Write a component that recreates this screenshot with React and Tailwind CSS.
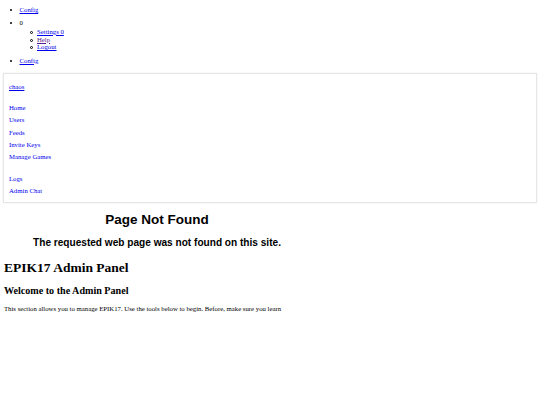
function Dot() {
  return <span className="mr-[8px] mt-[1px] h-[2px] w-[2px] shrink-0 rounded-full bg-black" />;
}

function Ring() {
  return <span className="mr-[4px] mt-[1px] h-[3px] w-[3px] shrink-0 rounded-full border-[0.75px] border-black" />;
}

export default function App() {
  const serif = { fontFamily: '"Liberation Serif", serif' };
  const navTop = ['Home', 'Users', 'Feeds', 'Invite Keys', 'Manage Games'];
  const navBottom = ['Logs', 'Admin Chat'];
  const sub = [
    { label: 'Settings 0', color: 'text-[#0000ee]' },
    { label: 'Help', color: 'text-[#551a8b]' },
    { label: 'Logout', color: 'text-[#0000ee]' },
  ];

  return (
    <div className="min-h-[405px] bg-white text-black text-[6.75px] leading-[7.8px] font-['Liberation_Serif',serif]">
      {/* top user menu */}
      <ul className="pl-[9.5px] pt-[6px] pb-[9px]">
        <li className="mb-[5.3px] flex items-center">
          <Dot />
          <a href="#" className="text-[#0000ee] underline">Config</a>
        </li>
        <li className="mb-[5.3px]">
          <div className="flex items-center">
            <Dot />
            <span>0</span>
          </div>
          <ul className="pl-[20.5px] mt-[1px]">
            {sub.map((s) => (
              <li key={s.label} className="flex items-center">
                <Ring />
                <a href="#" className={`${s.color} underline`}>{s.label}</a>
              </li>
            ))}
          </ul>
        </li>
        <li className="flex items-center">
          <Dot />
          <a href="#" className="text-[#0000ee] underline">Config</a>
        </li>
      </ul>

      {/* side nav box */}
      <div className="mx-[3px] h-[130px] border border-[#e6e6e6] shadow-[0_0_2px_rgba(0,0,0,0.08)] px-[5px] pt-[9px]">
        <a href="#" className="text-[#0000ee] underline">chaos</a>
        <div className="mt-[11px] flex flex-col">
          {navTop.map((n) => (
            <a key={n} href="#" className="text-[#0000ee] h-[12.2px] leading-[12.2px]">{n}</a>
          ))}
          <div className="h-[10px]" />
          {navBottom.map((n) => (
            <a key={n} href="#" className="text-[#0000ee] h-[12.2px] leading-[12.2px]">{n}</a>
          ))}
        </div>
      </div>

      {/* not found */}
      <div className="w-[314px] text-center font-['Liberation_Sans',Arial,sans-serif] font-bold pt-[9px]">
        <h1 className="text-[13.5px] leading-[15px]">Page Not Found</h1>
        <h2 className="text-[10.1px] leading-[12px] mt-[10px]">The requested web page was not found on this site.</h2>
      </div>

      <div className="px-[4px]" style={serif}>
        <h1 className="text-[13.5px] leading-[15.5px] font-bold mt-[11px]">EPIK17 Admin Panel</h1>
        <h2 className="text-[10.1px] leading-[11.6px] font-bold mt-[9px]">Welcome to the Admin Panel</h2>
        <p className="mt-[9px]">This section allows you to manage EPIK17. Use the tools below to begin. Before, make sure you learn</p>
      </div>
    </div>
  );
}
